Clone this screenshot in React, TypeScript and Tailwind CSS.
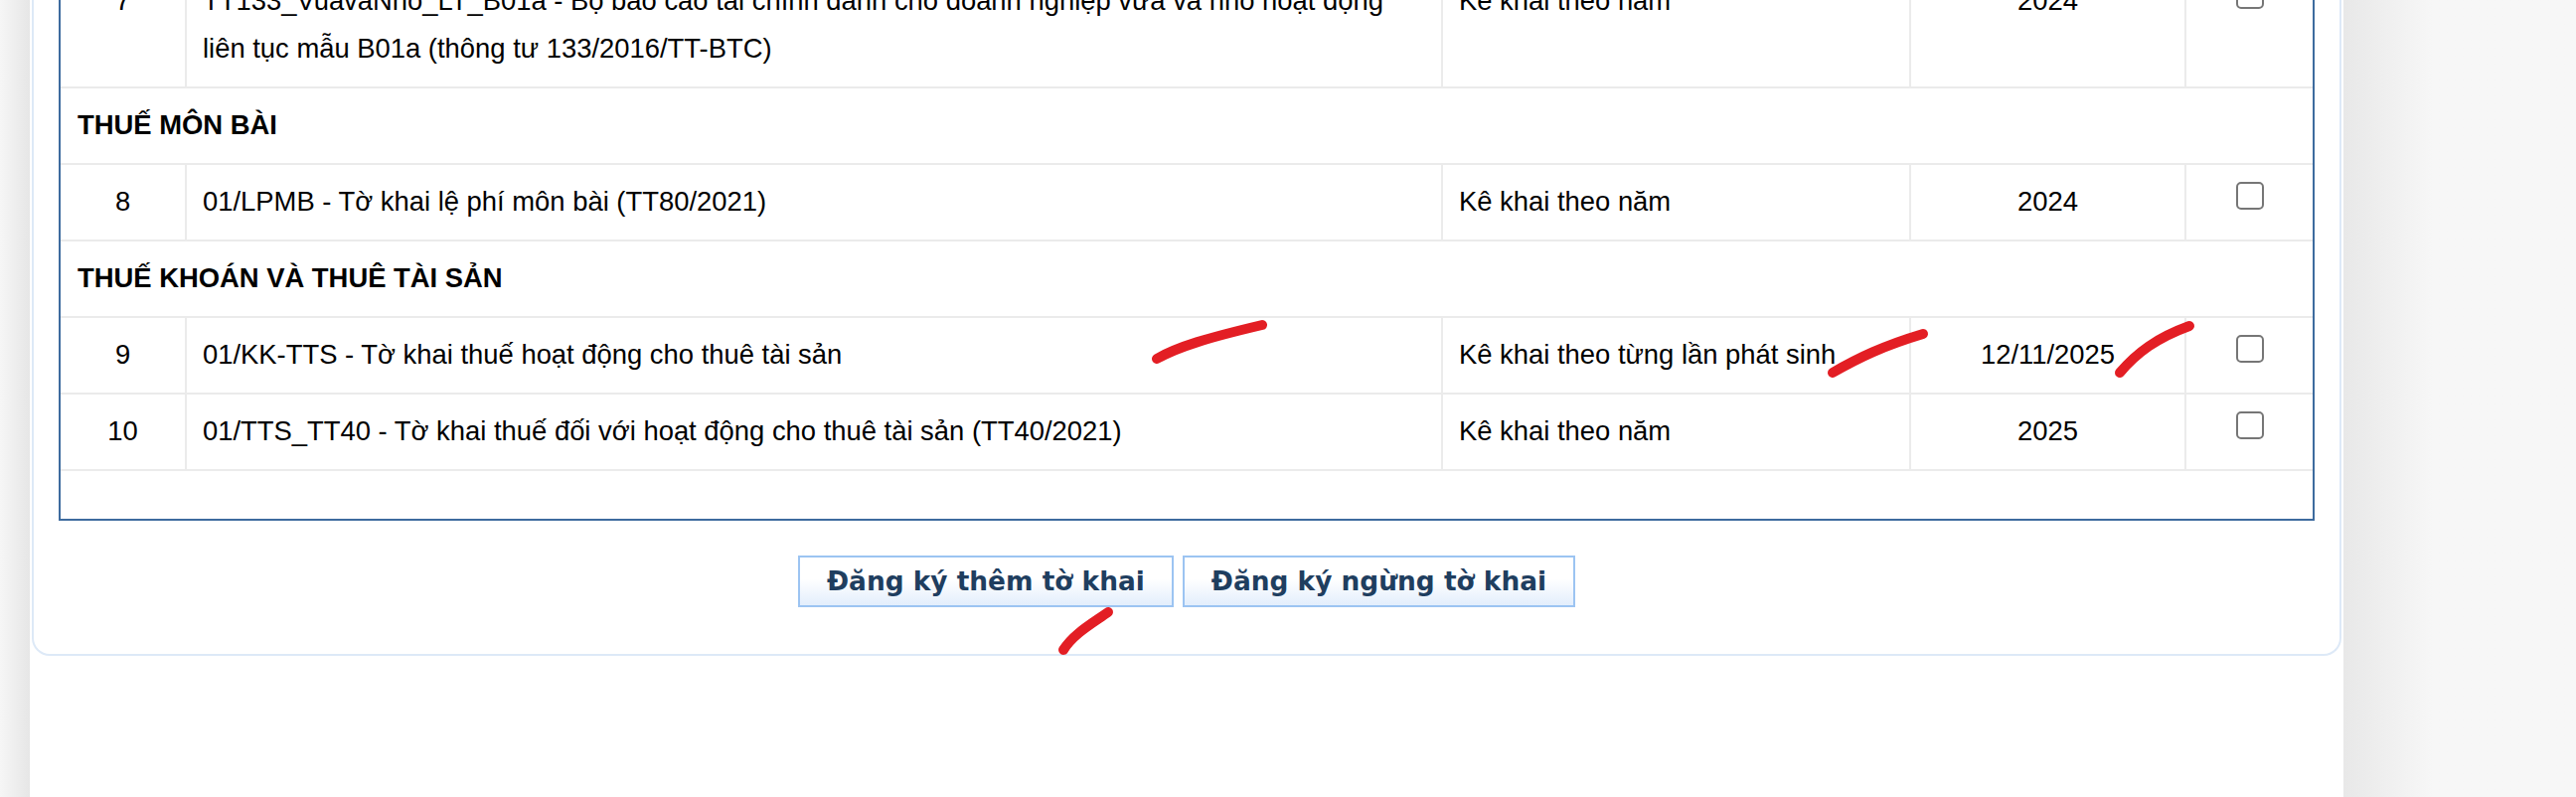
import React from "react";

type Row =
  | { kind: "section"; title: string }
  | {
      kind: "item";
      no: number;
      lines: string[];
      mode: string;
      period: string;
    };

const rows: Row[] = [
  {
    kind: "item",
    no: 7,
    lines: [
      "TT133_VuavaNho_LT_B01a - Bộ báo cáo tài chính dành cho doanh nghiệp vừa và nhỏ hoạt động",
      "liên tục mẫu B01a (thông tư 133/2016/TT-BTC)",
    ],
    mode: "Kê khai theo năm",
    period: "2024",
  },
  { kind: "section", title: "THUẾ MÔN BÀI" },
  {
    kind: "item",
    no: 8,
    lines: ["01/LPMB - Tờ khai lệ phí môn bài (TT80/2021)"],
    mode: "Kê khai theo năm",
    period: "2024",
  },
  { kind: "section", title: "THUẾ KHOÁN VÀ THUÊ TÀI SẢN" },
  {
    kind: "item",
    no: 9,
    lines: ["01/KK-TTS - Tờ khai thuế hoạt động cho thuê tài sản"],
    mode: "Kê khai theo từng lần phát sinh",
    period: "12/11/2025",
  },
  {
    kind: "item",
    no: 10,
    lines: ["01/TTS_TT40 - Tờ khai thuế đối với hoạt động cho thuê tài sản (TT40/2021)"],
    mode: "Kê khai theo năm",
    period: "2025",
  },
];

function Checkbox() {
  return (
    <div className="mt-[4px] w-[28px] h-[28px] rounded-[5px] border-2 border-[#767676] bg-white" />
  );
}

function TableRow({ row }: { row: Row }) {
  if (row.kind === "section") {
    return (
      <div className="border-b-2 border-[#ebebeb] py-[13.5px] pl-[17px] leading-[48px] font-bold">
        {row.title}
      </div>
    );
  }

  return (
    <div className="grid grid-cols-[127px_1264px_471px_277px_127px] border-b-2 border-[#ebebeb]">
      <div className="border-r-2 border-[#ebebeb] py-[13.5px] text-center leading-[48px]">
        {row.no}
      </div>
      <div className="border-r-2 border-[#ebebeb] py-[13.5px] px-[16px] leading-[48px]">
        {row.lines.map((l, i) => (
          <div key={i}>{l}</div>
        ))}
      </div>
      <div className="border-r-2 border-[#ebebeb] py-[13.5px] px-[16px] leading-[48px]">
        {row.mode}
      </div>
      <div className="border-r-2 border-[#ebebeb] py-[13.5px] text-center leading-[48px]">
        {row.period}
      </div>
      <div className="flex justify-center py-[13.5px]">
        <Checkbox />
      </div>
    </div>
  );
}

function ActionButton({ label }: { label: string }) {
  return (
    <button className="h-[52px] px-[27px] border-2 border-[#9cc4f2] bg-gradient-to-b from-white from-45% to-[#e3eefc] text-[#1f3e5f] font-bold text-[26.4px] font-['DejaVu_Sans',Verdana,sans-serif] leading-none">
      {label}
    </button>
  );
}

export default function App() {
  return (
    <div className="relative w-full h-[802px] overflow-hidden flex bg-[#f7f7f7] text-black font-['Liberation_Sans',Arial,sans-serif] text-[27.4px]">
      {/* left shadow */}
      <div className="w-[30px] shrink-0 bg-gradient-to-r from-[#f6f6f6] to-[#e6e6e6]" />

      {/* page column */}
      <div className="w-[2328px] shrink-0 bg-white px-[2px]">
        <div className="-mt-[36.5px] rounded-b-[18px] border-x-2 border-b-2 border-[#dde9f7] px-[25px]">
          {/* TABLE */}
          <div className="border-x-2 border-b-2 border-[#3e6b9e]">
            {rows.map((r, i) => (
              <TableRow key={i} row={r} />
            ))}
            <div className="h-[48px]" />
          </div>

          {/* ACTIONS */}
          <div className="flex justify-center gap-[9px] pt-[35.5px] pb-[47px]">
            <ActionButton label="Đăng ký thêm tờ khai" />
            <ActionButton label="Đăng ký ngừng tờ khai" />
          </div>
        </div>
      </div>

      {/* right shadow */}
      <div className="flex-1 bg-gradient-to-r from-[#e8e8e8] to-[#f7f7f7] to-[90px]" />

      {/* red pen marks */}
      <svg
        className="absolute left-0 top-0 pointer-events-none"
        width="2592"
        height="802"
        viewBox="0 0 2592 802"
        fill="none"
        stroke="#e31e24"
        strokeWidth="10"
        strokeLinecap="round"
        strokeLinejoin="round"
      >
        <path d="M1164 361 C1185 349 1215 340 1270 327" />
        <path d="M1844 375 C1870 360 1895 348 1935 336" />
        <path d="M2133 375 C2150 355 2170 340 2203 328" />
        <path d="M1070 654 C1080 638 1098 628 1115 616" />
      </svg>
    </div>
  );
}
